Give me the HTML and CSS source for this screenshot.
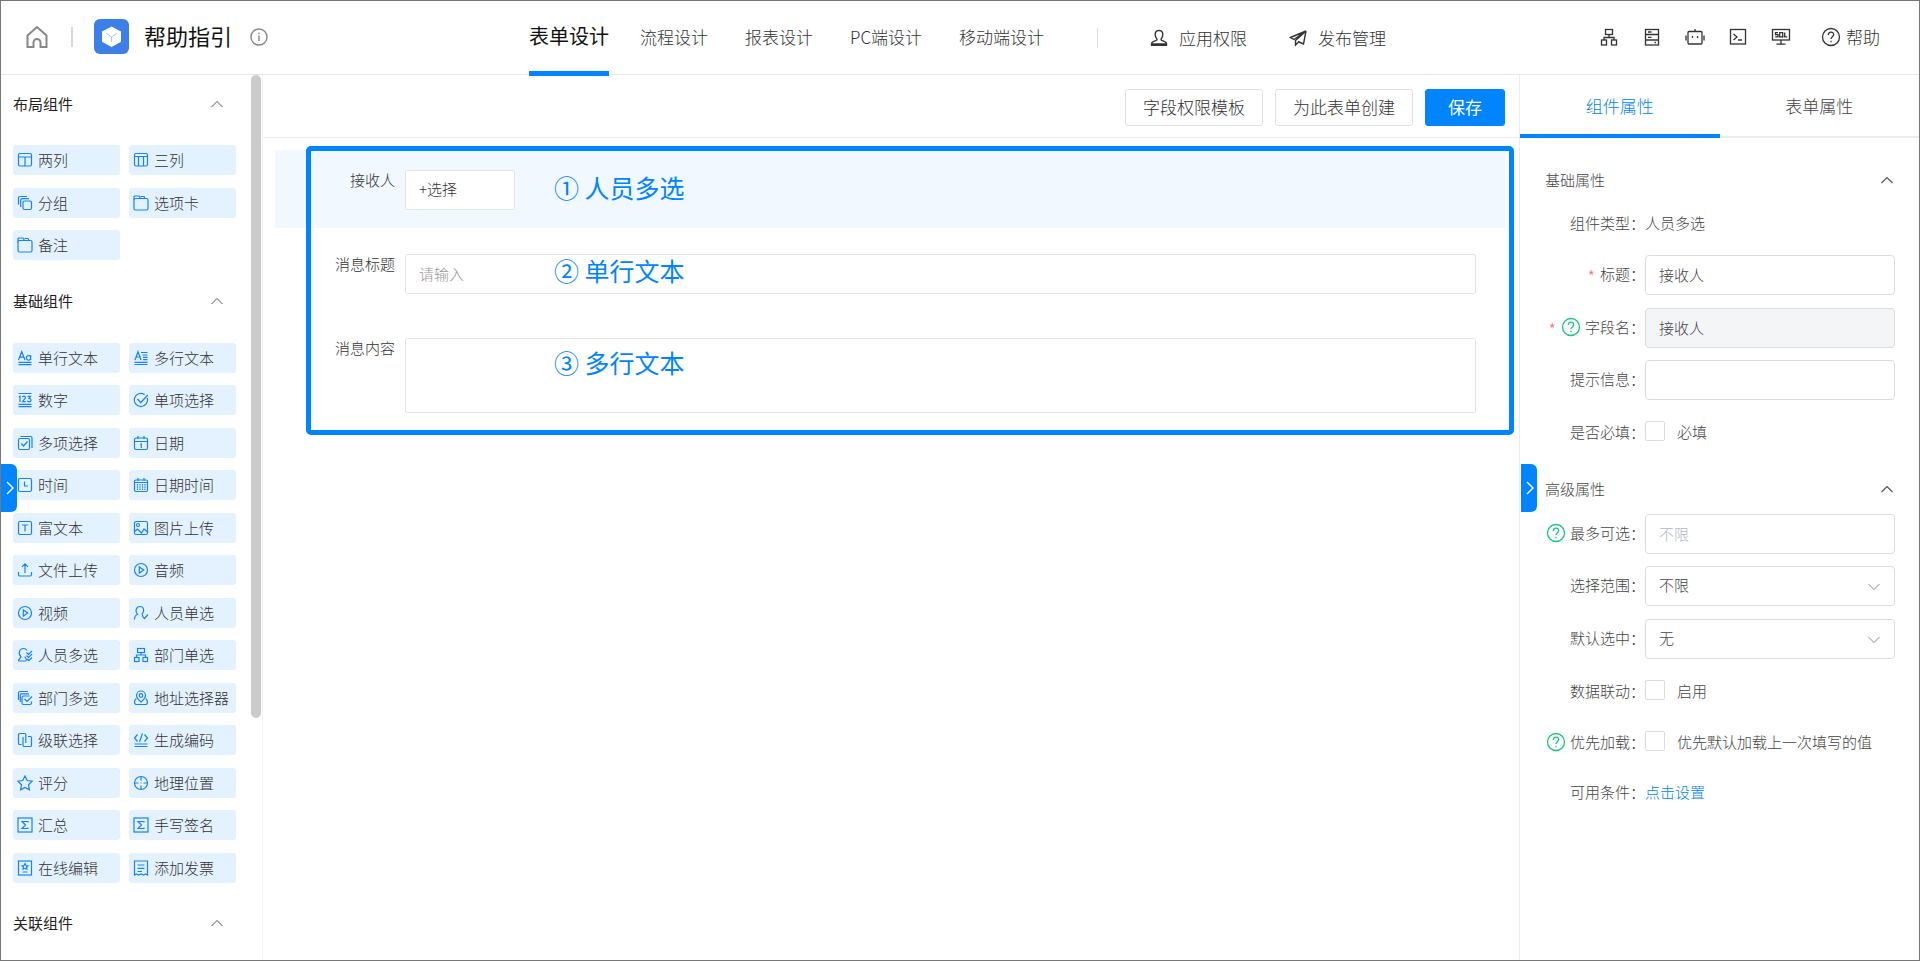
FILE: index.html
```html
<!DOCTYPE html>
<html lang="zh-CN">
<head>
<meta charset="utf-8">
<title>帮助指引 - 表单设计</title>
<link rel="stylesheet" href="styles.css">
</head>
<body>
<svg class="sprite" aria-hidden="true">
  <symbol id="i-col2" viewBox="0 0 16 16"><rect x="1.5" y="1.5" width="13" height="12.5" rx="1.5"/><path d="M1.5 5h13M8 5v9"/></symbol>
  <symbol id="i-col3" viewBox="0 0 16 16"><rect x="1.5" y="1.5" width="13" height="12.5" rx="1.5"/><path d="M1.5 4.5h13M5.5 4.5V14M10.5 4.5V14"/></symbol>
  <symbol id="i-group" viewBox="0 0 16 16"><rect x="6" y="6" width="8.5" height="8.5" rx="1.5"/><path d="M3.7 12V5.2a1.5 1.5 0 0 1 1.5-1.5H12M1.5 9.500V3a1.500 1.500 0 0 1 1.500-1.500h7"/></symbol>
  <symbol id="i-tab" viewBox="0 0 16 16"><rect x="1" y="3.500" width="14" height="11.500" rx="1.500"/><path d="M1 5V2a1 1 0 0 1 1-1h4l1.500 2.500M7.500 1.500h3.500l1 2"/></symbol>
  <symbol id="i-text" viewBox="0 0 16 16"><path d="M1.500 10 4.700 1.700 8 10M2.700 7.200h4M13.700 10V5.200M13.700 7.600a2.200 2.300 0 1 0 0 .5M1.500 12.300h13M1.500 14.700h13"/></symbol>
  <symbol id="i-lines" viewBox="0 0 16 16"><path d="M2 10 5 1.700 8 10M3 7h4M8 2.500h6.500M9.500 5h5M10 7.300h4.500M10 9.700h4.500M1.500 12.300h13M1.500 14.500h13"/></symbol>
  <symbol id="i-num" viewBox="0 0 16 16"><path d="M1.500 1.500h13M1.500 12.300h13M1.500 14.700h13M2 5l1-.8V10M5.500 5c.4-1.200 3-1.200 3 .5 0 1-2 2.500-3 4.200h3.200M10.500 4.300h3l-1.500 2c2.800.2 2.500 3.500.1 3.500-1 0-1.600-.4-1.800-1"/></symbol>
  <symbol id="i-radio" viewBox="0 0 16 16"><path d="M14.200 6a6.600 6.600 0 1 1-2.600-3.500M4.500 7l3.300 3.500 7-7.500"/></symbol>
  <symbol id="i-multi" viewBox="0 0 16 16"><rect x="1.500" y="3.500" width="11" height="11" rx="1.500"/><path d="M4.300 8.500 6.500 11l4-4.500M3.500 1.500h10a1.500 1.500 0 0 1 1.500 1.500v10"/></symbol>
  <symbol id="i-date" viewBox="0 0 16 16"><rect x="1.500" y="3" width="13" height="11.500" rx="1.500"/><path d="M1.500 6.500h13M5 1v3M11 1v3M7.300 9.500l1-.5v4"/></symbol>
  <symbol id="i-time" viewBox="0 0 16 16"><rect x="1.500" y="1.500" width="13" height="13" rx="1.500"/><path d="M7.500 4.500V9H11"/></symbol>
  <symbol id="i-datetime" viewBox="0 0 16 16"><rect x="1.500" y="3" width="13" height="11.500" rx="1.500"/><path d="M1.500 5.500h13M5 1v3M11 1v3"/><path d="M4.500 7v6M7 7v6M9.500 7v6M12 7v6" stroke-dasharray="1.500 .8"/></symbol>
  <symbol id="i-rich" viewBox="0 0 16 16"><rect x="1.500" y="1.500" width="13" height="13" rx="1.500"/><path d="M5 5h6M8 5v6.500"/></symbol>
  <symbol id="i-image" viewBox="0 0 16 16"><rect x="1.500" y="1.500" width="13" height="13" rx="1.500"/><circle cx="5" cy="5" r="1.500"/><path d="M1.500 11.500 4.500 9l4 4 2.500-4 3.500 3"/></symbol>
  <symbol id="i-upload" viewBox="0 0 16 16"><path d="M8 11V2M5 4.800 8 1.800l3 3M1.500 10v2.500a1.500 1.500 0 0 0 1.500 1.500h10a1.500 1.500 0 0 0 1.500-1.500V10"/></symbol>
  <symbol id="i-play" viewBox="0 0 16 16"><circle cx="8" cy="8" r="6.500"/><path d="M6.300 5v6l4.400-3z"/></symbol>
  <symbol id="i-user1" viewBox="0 0 16 16"><path d="M1.500 14.500c0-3 1.500-4.500 3-5C2 7 2.500 1.500 7 1.500S11.500 7 9 9c.8 1 .5 2 1 3l1.500 1.500 3.500-4"/></symbol>
  <symbol id="i-users" viewBox="0 0 16 16"><path d="M9 14H2c-.6 0-.6-1 0-1.500l2-2.500C1 7 2 1.500 6.500 1.500c2 0 3 1 3.500 2M8 9.500c0 2 2 2.500 2 4.500M9.500 5.500 11.500 7.500 15 4M9.500 8.500l2 2L15 7M10.500 12l1.500 1.500 3-3"/></symbol>
  <symbol id="i-org" viewBox="0 0 16 16"><rect x="4.500" y="1.500" width="7" height="4"/><rect x="1.500" y="10.500" width="4.500" height="4"/><rect x="10" y="10.500" width="4.500" height="4"/><path d="M8 5.500V8M3.500 10.500V8h9v2.500"/></symbol>
  <symbol id="i-orgs" viewBox="0 0 16 16"><path d="M12.500 6H6.500A1.500 1.500 0 0 0 5 7.500V13a1.500 1.500 0 0 0 1.500 1.500H13a1.500 1.500 0 0 0 1.500-1.500v-1.500M7.500 9l2.500 2.500 5-5M3.300 12V5a1.200 1.200 0 0 1 1.200-1.200H12M1.500 10V3A1.500 1.500 0 0 1 3 1.500h8"/></symbol>
  <symbol id="i-addr" viewBox="0 0 16 16"><path d="M8 12C5 9.500 3.500 7.500 3.500 5.500a4.500 4.500 0 0 1 9 0c0 2-1.500 4-4.500 6.500zM3.300 8.500C.8 10.500 1 14.500 3.500 14.500h9c2.500 0 2.700-4 .2-6"/><circle cx="8" cy="5.500" r="1.800"/></symbol>
  <symbol id="i-cascade" viewBox="0 0 16 16"><path d="M4.500 12.500H2.800a1.300 1.300 0 0 1-1.300-1.300V2.800a1.300 1.300 0 0 1 1.300-1.300h4.700a1.300 1.300 0 0 1 1.300 1.300V11M11 4.500h2.200a1.300 1.300 0 0 1 1.300 1.300v7.400a1.300 1.300 0 0 1-1.300 1.300H7.300A1.300 1.300 0 0 1 6 13.200V5"/></symbol>
  <symbol id="i-code" viewBox="0 0 16 16"><path d="M4.500 2.500 1.500 6l3 3.500M11.500 2.500l3 3.500-3 3.500M9.500 1.500l-3 8.500M1.500 12h13M1.500 14.500h13"/></symbol>
  <symbol id="i-star" viewBox="0 0 16 16"><path d="M8 1l2.200 4.500 5 .7-3.700 3.500.9 5.100L8 12.400l-4.400 2.400.9-5.100L.8 6.200l5-.7z"/></symbol>
  <symbol id="i-geo" viewBox="0 0 16 16"><circle cx="8" cy="8" r="6.500"/><path d="M8 1.500v4M8 10.500v4M1.500 8h4M10.500 8h4M7.500 8h1"/></symbol>
  <symbol id="i-sum" viewBox="0 0 16 16"><rect x="1" y="1" width="14" height="14"/><path d="M11 5.500V4.500H5L8.500 8 5 11.500h6v-1"/></symbol>
  <symbol id="i-edit" viewBox="0 0 16 16"><rect x="1.500" y="1" width="13" height="14"/><path d="M5.500 12h5M8 3.500l1 2 2 .3-1.500 1.400.4 2L8 8.300l-1.900.9.400-2L5 5.800l2-.3z"/></symbol>
  <symbol id="i-bill" viewBox="0 0 16 16"><path d="M1.500 15V1h13v14l-2-1-2 1-2.500-1-2.500 1-2-1zM4.500 5h7M4.500 8.300h7M4.500 11.500h4.500"/></symbol>
  <symbol id="i-up" viewBox="0 0 14 14"><path d="M1.500 10 7 4.500l5.500 5.500"/></symbol>
  <symbol id="i-right" viewBox="0 0 14 14"><path d="M4 1l6 6-6 6"/></symbol>
  <symbol id="i-help" viewBox="0 0 20 20"><circle cx="10" cy="10" r="8.500"/><path d="M7.300 8c0-3.700 5.400-3.700 5.400-.4 0 2-2.700 2.200-2.700 4.400"/><path d="M10 13.800v1.400"/></symbol>
</svg>

<div class="app">
  <header class="header">
    <div class="brand">
      <a class="home" href="#" aria-label="首页"><svg viewBox="0 0 24 24"><path d="M2.500 10.500 12 2l9.500 8.500V22h-6v-4.500a3.500 3.500 0 0 0-7 0V22h-6z"/></svg></a>
      <span class="bar"></span>
      <svg class="logo" viewBox="0 0 35 35" aria-hidden="true"><rect width="35" height="35" rx="6" fill="#3d7fe8"/><path d="M17.500 7.500 27 12.500v10.300L17.500 28 8 22.800V12.500z" fill="#fff"/><path d="M12 14l5.500 4 5.500-4M17.500 18v5" fill="none" stroke="#a9c8f7"/></svg>
      <h1 class="title">帮助指引</h1>
      <svg class="info" viewBox="0 0 18 18" aria-hidden="true"><circle cx="9" cy="9" r="8"/><path d="M9 7.500V13M9 4.500V6"/></svg>
    </div>
    <nav class="nav">
      <a class="nav-item active" href="#">表单设计</a>
      <a class="nav-item" href="#">流程设计</a>
      <a class="nav-item" href="#">报表设计</a>
      <a class="nav-item" href="#">PC端设计</a>
      <a class="nav-item" href="#">移动端设计</a>
    </nav>
    <div class="manage">
      <a href="#"><svg viewBox="0 0 18 18"><path d="M9 1.500c3.500 0 4.500 3 3.500 6-.5 1.500-1.500 2-1.500 3.200 0 1.300 5.500 1 5.500 4v1.500h-15v-1.500c0-3 5.500-2.700 5.500-4 0-1.200-1-1.700-1.500-3.200-1-3 0-6 3.500-6zM1.500 15h15"/></svg>应用权限</a>
      <a href="#"><svg viewBox="0 0 18 18"><path d="M17 2 1.500 8.500 5 10.500 17 2 6.500 11.500V16l3-3M17 2l-2.500 13L9 12.500"/></svg>发布管理</a>
    </div>
    <div class="tools">
      <button type="button" aria-label="组织"><svg viewBox="0 0 20 20"><rect x="6.500" y="2.500" width="7" height="5"/><rect x="2.500" y="13" width="5" height="5"/><rect x="12.500" y="13" width="5" height="5"/><path d="M10 7.500v3M5 13v-2.500h10V13"/></svg></button>
      <button type="button" aria-label="数据"><svg viewBox="0 0 20 20"><rect x="3.500" y="2.500" width="13" height="15.500"/><path d="M3.500 7.500h13M3.500 13h13M6 5h3.500M6 10.300h3.500M12.500 15.500h1.500"/></svg></button>
      <button type="button" aria-label="机器人"><svg viewBox="0 0 20 20"><rect x="3" y="4.500" width="14" height="12.500" rx="1"/><path d="M10 2v2.500M1 8.500v5M19 8.500v5M7.500 9v2M12.500 9v2"/></svg></button>
      <button type="button" aria-label="终端"><svg viewBox="0 0 20 20"><rect x="2.500" y="2.500" width="15" height="14.500"/><path d="M5.500 7 9 10l-3.500 3M10 13h4"/></svg></button>
      <button type="button" aria-label="SQL"><svg viewBox="0 0 20 20"><rect x="1.500" y="2.500" width="17" height="10.500"/><path d="M10 13v4M5.500 17.200h9M7 5.700H4.500v2H7v2.200H4.200M8.700 5.700h3v4.200h-3zM11 9l1.300 1.500M13.700 5.500v4.400h2.500"/></svg></button>
      <a class="help" href="#"><svg aria-hidden="true"><use href="#i-help"/></svg>帮助</a>
    </div>
  </header>

  <div class="body">
    <aside class="palette">
      <div class="palette-list">
        <section>
          <h2>布局组件<svg><use href="#i-up"/></svg></h2>
          <div class="chips">
            <button class="chip"><svg><use href="#i-col2"/></svg>两列</button>
            <button class="chip"><svg><use href="#i-col3"/></svg>三列</button>
            <button class="chip"><svg><use href="#i-group"/></svg>分组</button>
            <button class="chip"><svg><use href="#i-tab"/></svg>选项卡</button>
            <button class="chip"><svg><use href="#i-tab"/></svg>备注</button>
          </div>
        </section>
        <section>
          <h2>基础组件<svg><use href="#i-up"/></svg></h2>
          <div class="chips chips-basic">
            <button class="chip"><svg><use href="#i-text"/></svg>单行文本</button>
            <button class="chip"><svg><use href="#i-lines"/></svg>多行文本</button>
            <button class="chip"><svg><use href="#i-num"/></svg>数字</button>
            <button class="chip"><svg><use href="#i-radio"/></svg>单项选择</button>
            <button class="chip"><svg><use href="#i-multi"/></svg>多项选择</button>
            <button class="chip"><svg><use href="#i-date"/></svg>日期</button>
            <button class="chip"><svg><use href="#i-time"/></svg>时间</button>
            <button class="chip"><svg><use href="#i-datetime"/></svg>日期时间</button>
            <button class="chip"><svg><use href="#i-rich"/></svg>富文本</button>
            <button class="chip"><svg><use href="#i-image"/></svg>图片上传</button>
            <button class="chip"><svg><use href="#i-upload"/></svg>文件上传</button>
            <button class="chip"><svg><use href="#i-play"/></svg>音频</button>
            <button class="chip"><svg><use href="#i-play"/></svg>视频</button>
            <button class="chip"><svg><use href="#i-user1"/></svg>人员单选</button>
            <button class="chip"><svg><use href="#i-users"/></svg>人员多选</button>
            <button class="chip"><svg><use href="#i-org"/></svg>部门单选</button>
            <button class="chip"><svg><use href="#i-orgs"/></svg>部门多选</button>
            <button class="chip"><svg><use href="#i-addr"/></svg>地址选择器</button>
            <button class="chip"><svg><use href="#i-cascade"/></svg>级联选择</button>
            <button class="chip"><svg><use href="#i-code"/></svg>生成编码</button>
            <button class="chip"><svg><use href="#i-star"/></svg>评分</button>
            <button class="chip"><svg><use href="#i-geo"/></svg>地理位置</button>
            <button class="chip"><svg><use href="#i-sum"/></svg>汇总</button>
            <button class="chip"><svg><use href="#i-sum"/></svg>手写签名</button>
            <button class="chip"><svg><use href="#i-edit"/></svg>在线编辑</button>
            <button class="chip"><svg><use href="#i-bill"/></svg>添加发票</button>
          </div>
        </section>
        <section>
          <h2>关联组件<svg><use href="#i-up"/></svg></h2>
        </section>
      </div>
      <div class="scroll" aria-hidden="true"></div>
      <button class="handle" type="button" aria-label="收起组件栏"><svg><use href="#i-right"/></svg></button>
    </aside>

    <main class="canvas">
      <div class="toolbar">
        <button class="btn" type="button">字段权限模板</button>
        <button class="btn" type="button">为此表单创建</button>
        <button class="btn primary" type="button">保存</button>
      </div>
      <form class="form">
        <div class="field selected">
          <label for="receiver">接收人</label>
          <button class="picker" id="receiver" type="button">+选择</button>
        </div>
        <div class="field">
          <label for="subject">消息标题</label>
          <input id="subject" type="text" placeholder="请输入">
        </div>
        <div class="field">
          <label for="content">消息内容</label>
          <textarea id="content"></textarea>
        </div>
        <div class="notes">
          <p class="note note-1">① 人员多选</p>
          <p class="note note-2">② 单行文本</p>
          <p class="note note-3">③ 多行文本</p>
        </div>
      </form>
    </main>

    <aside class="props">
      <div class="tabs" role="tablist">
        <button class="tab active" type="button" role="tab">组件属性</button>
        <button class="tab" type="button" role="tab">表单属性</button>
      </div>
      <button class="handle" type="button" aria-label="收起属性栏"><svg><use href="#i-right"/></svg></button>
      <section class="group basic">
        <h3>基础属性<svg><use href="#i-up"/></svg></h3>
        <div class="prop plain"><span class="name">组件类型：</span><span>人员多选</span></div>
        <div class="prop"><label class="name" for="p-title"><i>*</i>标题：</label><input id="p-title" type="text" value="接收人"></div>
        <div class="prop"><label class="name" for="p-field"><i>*</i><svg><use href="#i-help"/></svg>字段名：</label><input id="p-field" type="text" value="接收人" disabled></div>
        <div class="prop"><label class="name" for="p-tip">提示信息：</label><input id="p-tip" type="text"></div>
        <div class="prop check"><span class="name">是否必填：</span><input id="p-req" type="checkbox"><label for="p-req">必填</label></div>
      </section>
      <section class="group advanced">
        <h3>高级属性<svg><use href="#i-up"/></svg></h3>
        <div class="prop"><label class="name" for="p-max"><svg><use href="#i-help"/></svg>最多可选：</label><input id="p-max" type="text" placeholder="不限"></div>
        <div class="prop"><label class="name" for="p-range">选择范围：</label><span class="select"><select id="p-range"><option>不限</option></select><svg><use href="#i-up"/></svg></span></div>
        <div class="prop"><label class="name" for="p-def">默认选中：</label><span class="select"><select id="p-def"><option>无</option></select><svg><use href="#i-up"/></svg></span></div>
        <div class="prop check"><span class="name">数据联动：</span><input id="p-link" type="checkbox"><label for="p-link">启用</label></div>
        <div class="prop check"><span class="name"><svg><use href="#i-help"/></svg>优先加载：</span><input id="p-pre" type="checkbox"><label for="p-pre">优先默认加载上一次填写的值</label></div>
        <div class="prop check"><span class="name">可用条件：</span><a href="#">点击设置</a></div>
      </section>
    </aside>
  </div>
</div>
</body>
</html>
```
FILE: styles.css
```css
* { box-sizing: border-box; }

body {
  margin: 0;
  color: #333;
  background: #fff;
  font: 300 15px/20px "Noto Sans CJK SC", sans-serif;
}

h1, h2, h3, p { margin: 0; }
a { color: inherit; text-decoration: none; }
button, input, select, textarea { font: inherit; color: inherit; }
button { border: 0; background: none; padding: 0; cursor: pointer; }
svg { flex: none; fill: none; stroke: currentColor; }

.sprite { position: absolute; width: 0; height: 0; }

.app {
  height: 100vh;
  display: flex;
  flex-direction: column;
  border: 1px solid #777;
  overflow: hidden;
}

/* Header */
.header {
  flex: none;
  height: 74px;
  display: flex;
  align-items: center;
  border-bottom: 1px solid #e6e6e6;
}
.brand { flex: none; width: 522px; padding: 0 0 2px 24px; display: flex; align-items: center; }
.home { display: flex; color: #888; }
.home svg { width: 24px; height: 24px; stroke-width: 2; }
.bar { width: 2px; height: 20px; margin: 0 21px 0 22px; background: #d8d8d8; }
.logo { width: 35px; height: 35px; stroke: none; }
.title { margin-left: 15px; padding-bottom: 4px; color: #111; font-size: 22px; font-weight: 400; line-height: 32px; }
.info { width: 18px; height: 18px; margin-left: 18px; color: #888; stroke-width: 1.4; }

.nav { height: 75px; align-self: flex-start; display: flex; gap: 25px; font-size: 17px; line-height: 72px; }
.nav-item { padding: 0 6px; white-space: nowrap; }
.nav-item.active {
  padding: 0;
  margin-left: 6px;
  border-bottom: 5px solid #0084ff;
  color: #111;
  font-size: 20px;
  font-weight: 400;
  line-height: 70px;
}

.manage {
  height: 20px;
  margin-left: 47px;
  padding-left: 52px;
  display: flex;
  align-items: center;
  gap: 42px;
  border-left: 1px solid #ddd;
  font-size: 17px;
  white-space: nowrap;
}
.manage a { display: flex; align-items: center; gap: 11px; }
.manage svg { width: 18px; height: 18px; stroke-width: 1.4; }

.tools { margin-left: auto; padding: 0 39px 2px 0; display: flex; align-items: center; gap: 23px; }
.tools svg { display: block; width: 20px; height: 20px; stroke-width: 1.3; }
.help { margin-left: 7px; display: flex; align-items: center; gap: 5px; font-size: 17px; }

.body { flex: 1; min-height: 0; display: flex; }

/* Component palette */
.palette { position: relative; flex: none; width: 262px; display: flex; border-right: 1px solid #f4f4f4; }
.palette-list { flex: none; width: 250px; padding: 3px 15px 0 12px; overflow: hidden; }
.scroll { flex: none; width: 10px; height: 643px; border-radius: 5px; background: #cbcbcb; }
.palette h2 {
  height: 52px;
  padding-right: 12px;
  display: flex;
  align-items: center;
  justify-content: space-between;
  color: #222;
  font-size: 15px;
  font-weight: 400;
}
.palette h2 svg, .group h3 svg { width: 14px; height: 14px; color: #555; }
.chips {
  padding: 15px 0 2px;
  display: grid;
  grid-template-columns: 1fr 1fr;
  grid-auto-rows: 43px 42px;
  column-gap: 9px;
}
.chips-basic { padding-top: 16px; grid-auto-rows: 42px 43px; }
.chip {
  height: 30px;
  padding: 0 4px;
  display: flex;
  align-items: center;
  gap: 5px;
  border-radius: 3px;
  background: #e4f1ff;
  white-space: nowrap;
}
.chip svg { width: 16px; height: 16px; color: #1583ff; stroke-width: 1.2; }

.handle {
  position: absolute;
  top: 389px;
  left: 0;
  width: 16px;
  height: 48px;
  display: flex;
  align-items: center;
  justify-content: flex-end;
  border-radius: 0 6px 6px 0;
  background: #0084ff;
  color: #fff;
}
.handle svg { width: 14px; height: 14px; stroke-width: 1.4; }

/* Form canvas */
.canvas { flex: 1; min-width: 0; }
.toolbar {
  height: 63px;
  padding-right: 14px;
  display: flex;
  align-items: center;
  justify-content: flex-end;
  gap: 12px;
  border-bottom: 1px solid #ececec;
}
.btn { width: 138px; height: 37px; margin-top: 2px; border: 1px solid #e2e2e2; border-radius: 3px; font-size: 17px; }
.btn.primary { width: 80px; border-color: #0084ff; background: #0084ff; color: #fff; font-weight: 400; }

.form {
  position: relative;
  margin: 12px 14px 0 12px;
  display: flex;
  flex-direction: column;
  gap: 6px;
}
.field { min-height: 78px; padding: 20px 29px 0 0; display: flex; gap: 10px; }
.field.selected { background: #f1f8ff; }
.field label { flex: none; width: 120px; text-align: right; }
.field input, .field textarea, .picker {
  height: 40px;
  padding: 0 13px 2px;
  border: 1px solid #e4e4e4;
  border-radius: 2px;
  background: #fff;
}
.field input, .field textarea { flex: 1; min-width: 0; }
.field textarea { height: 75px; resize: none; }
.picker { width: 110px; text-align: left; }
.field ::placeholder { color: #999; opacity: 1; }

.notes {
  position: absolute;
  top: -4px;
  left: 31px;
  right: -9px;
  height: 289px;
  border: 5px solid #0084ff;
  border-radius: 5px;
  pointer-events: none;
}
.note { position: absolute; left: 243px; color: #0084ff; font-size: 25px; font-weight: 400; line-height: 32px; }
.note-1 { top: 20px; }
.note-2 { top: 103px; }
.note-3 { top: 195px; }

/* Properties panel */
.props { position: relative; flex: none; width: 400px; border-left: 1px solid #ececec; color: #444; }
.tabs { display: flex; height: 63px; font-size: 17px; }
.tab { flex: 1; border-bottom: 2px solid #ececec; }
.tab.active { padding-top: 2px; border-bottom: 4px solid #0084ff; color: #0084ff; }
.props .handle { left: 1px; }
.group { padding: 0 24px 0 25px; display: grid; align-items: start; }
.basic { padding-top: 22px; grid-template-rows: 40px 55px 53px 52px 53px 53px; }
.advanced { padding-top: 3px; grid-template-rows: 45px 52px 53px 53px 51px 50px 50px; }
.group h3 { height: 40px; display: flex; align-items: center; justify-content: space-between; font-size: 15px; font-weight: 300; }
.group h3 svg { margin-right: 1px; stroke-width: 1.2; }
.prop { display: flex; align-items: flex-start; }
.prop.plain { padding-top: 13px; }
.name { flex: none; width: 100px; height: 38px; display: flex; align-items: center; justify-content: flex-end; white-space: nowrap; }
.plain .name { height: 20px; }
.name i { margin-right: 5px; padding-top: 4px; color: #f56c6c; font-size: 17px; font-style: normal; }
.name svg { width: 20px; height: 20px; margin-right: 4px; color: #16c77a; stroke-width: 1.3; }
.prop input[type="text"], .select { flex: 1; min-width: 0; height: 40px; border: 1px solid #dcdcdc; border-radius: 4px; background: #fff; }
.prop input[type="text"], .select select { padding: 0 13px 2px; }
.prop input[type="text"]:disabled { background: #f4f5f7; }
.prop ::placeholder { color: #b4b8c0; opacity: 1; }
.select { position: relative; display: flex; }
.select select { flex: 1; border: 0; background: none; appearance: none; }
.select svg { position: absolute; right: 13px; top: 13px; width: 14px; height: 14px; color: #888; transform: rotate(180deg); pointer-events: none; }
.prop.check { line-height: 38px; }
.prop input[type="checkbox"] { appearance: none; width: 20px; height: 20px; margin: 8px 12px 0 0; border: 1px solid #dcdcdc; border-radius: 2px; background: #fff; }
.prop a { color: #0084ff; }
```
